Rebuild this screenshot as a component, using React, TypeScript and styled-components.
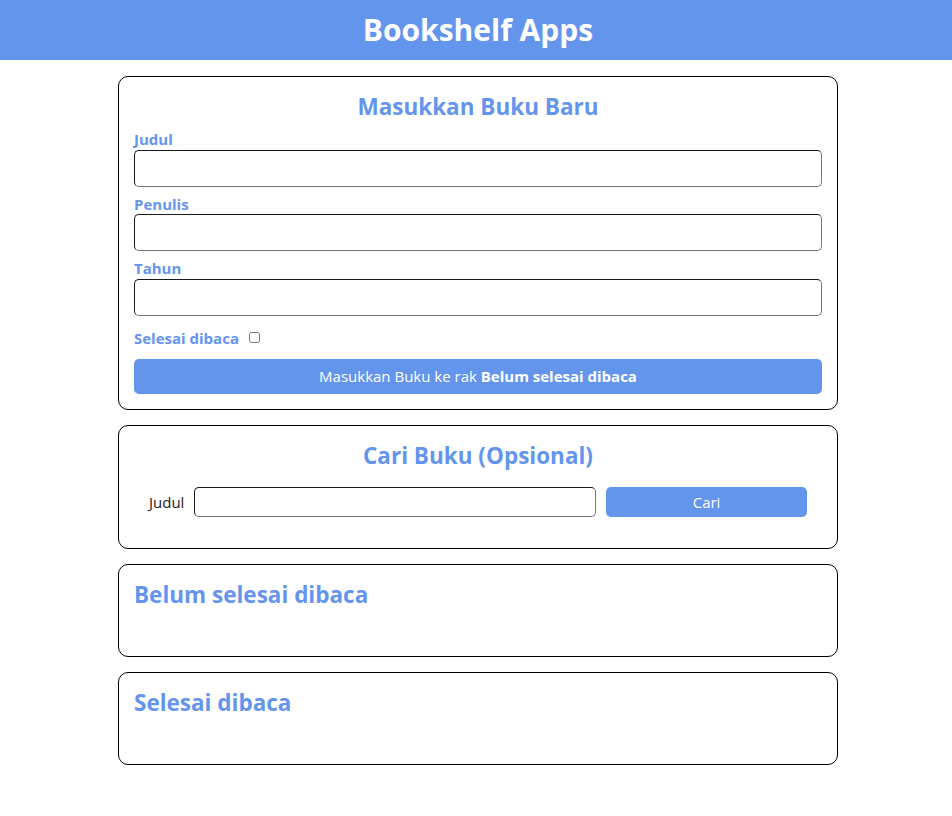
import React from 'react';
import { styled, createGlobalStyle } from 'styled-components';

const GlobalStyle = createGlobalStyle`
  * {
    box-sizing: border-box;
    margin: 0;
    padding: 0;
  }
  body {
    margin: 0;
    background: #ffffff;
    font-family: 'Open Sans', 'Noto Sans', sans-serif;
    font-size: 15px;
  }
`;

const BLUE = '#6495ed';

const App = () => {
  return (
    <>
      <GlobalStyle />
      <HeadBar>
        <Title>Bookshelf Apps</Title>
      </HeadBar>
      <Main>
        <InputSection>
          <CenterHeading>Masukkan Buku Baru</CenterHeading>
          <form onSubmit={(e) => e.preventDefault()}>
            <Field>
              <FieldLabel htmlFor="inputBookTitle">Judul</FieldLabel>
              <TextInput id="inputBookTitle" type="text" />
            </Field>
            <Field>
              <FieldLabel htmlFor="inputBookAuthor">Penulis</FieldLabel>
              <TextInput id="inputBookAuthor" type="text" />
            </Field>
            <Field>
              <FieldLabel htmlFor="inputBookYear">Tahun</FieldLabel>
              <TextInput id="inputBookYear" type="number" />
            </Field>
            <InlineField>
              <InlineLabel htmlFor="inputBookIsComplete">Selesai dibaca</InlineLabel>
              <CheckBox id="inputBookIsComplete" type="checkbox" />
            </InlineField>
            <SubmitButton type="submit">
              Masukkan Buku ke rak <b>Belum selesai dibaca</b>
            </SubmitButton>
          </form>
        </InputSection>

        <SearchSection>
          <CenterHeading>Cari Buku (Opsional)</CenterHeading>
          <SearchForm onSubmit={(e) => e.preventDefault()}>
            <SearchLabel htmlFor="searchBookTitle">Judul</SearchLabel>
            <SearchInput id="searchBookTitle" type="text" />
            <SearchButton type="submit">Cari</SearchButton>
          </SearchForm>
        </SearchSection>

        <BookShelf>
          <ShelfHeading>Belum selesai dibaca</ShelfHeading>
          <BookList id="incompleteBookshelfList" />
        </BookShelf>
        <BookShelf>
          <ShelfHeading>Selesai dibaca</ShelfHeading>
          <BookList id="completeBookshelfList" />
        </BookShelf>
      </Main>
    </>
  );
};

export default App;

const HeadBar = styled.header`
  display: flex;
  align-items: center;
  justify-content: center;
  height: 60px;
  padding-left: 4px;
  padding-bottom: 1px;
  background-color: ${BLUE};
  color: #ffffff;
`;
const Title = styled.h1`
  font-size: 30px;
  font-weight: 700;
  line-height: 36px;
`;
const Main = styled.main`
  width: 720px;
  margin: 16px auto 0;
  transform: translateX(2px);
  padding-bottom: 16px;
`;
const Section = styled.section`
  border: 1px solid #000000;
  border-radius: 10px;
  padding: 15px;
`;
const InputSection = styled(Section)`
  display: flex;
  flex-direction: column;
`;
const SearchSection = styled(Section)`
  margin-top: 15px;
`;
const BookShelf = styled(Section)`
  margin-top: 15px;
`;
const CenterHeading = styled.h2`
  text-align: center;
  color: ${BLUE};
  font-size: 22.5px;
  font-weight: 700;
  line-height: 30px;
`;
const ShelfHeading = styled.h2`
  color: ${BLUE};
  font-size: 22.5px;
  font-weight: 700;
  line-height: 30px;
`;
const BookList = styled.div`
  min-height: 31px;
`;
const Field = styled.div`
  margin: 8px 0;
`;
const FieldLabel = styled.label`
  display: block;
  color: ${BLUE};
  font-size: 15px;
  font-weight: 700;
  line-height: 19.5px;
`;
const TextInput = styled.input`
  display: block;
  width: 100%;
  height: 37px;
  padding: 8px;
  border: 1px solid #767676;
  border-top-color: #1a1a1a;
  border-left-color: #1a1a1a;
  border-radius: 5px;
  font-family: inherit;
  font-size: 15px;
  background: #ffffff;
`;
const InlineField = styled.div`
  display: flex;
  align-items: center;
  height: 20px;
  margin: 12px 0 11px;
`;
const InlineLabel = styled.label`
  color: ${BLUE};
  font-size: 15px;
  font-weight: 700;
  margin-right: 10px;
`;
const CheckBox = styled.input`
  width: 11px;
  height: 11px;
  margin: 0;
`;
const SubmitButton = styled.button`
  display: block;
  width: 100%;
  height: 35px;
  padding: 0 8px;
  border: 0;
  border-radius: 5px;
  background-color: ${BLUE};
  color: #ffffff;
  font-family: inherit;
  font-size: 15px;
  cursor: pointer;
`;
const SearchForm = styled.form`
  display: grid;
  grid-template-columns: auto 1fr 0.5fr;
  gap: 10px;
  height: 30px;
  margin: 16px 15px;
`;
const SearchLabel = styled.label`
  display: flex;
  align-items: center;
  font-size: 15px;
  color: #1a1a1a;
`;
const SearchInput = styled.input`
  padding: 5px;
  border: 1px solid #767676;
  border-top-color: #1a1a1a;
  border-left-color: #1a1a1a;
  border-radius: 5px;
  font-family: inherit;
`;
const SearchButton = styled.button`
  border: 0;
  border-radius: 5px;
  background-color: ${BLUE};
  color: #ffffff;
  font-family: inherit;
  font-size: 15px;
  cursor: pointer;
`;
